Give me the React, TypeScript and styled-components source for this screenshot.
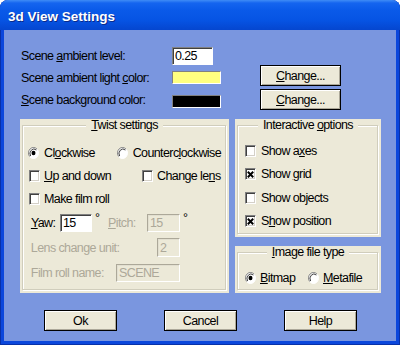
import styled, { createGlobalStyle } from "styled-components";

const GlobalStyle = createGlobalStyle`
  html, body {
    margin: 0;
    padding: 0;
    background: #ffffff;
  }
  body {
    font-family: "Liberation Sans", Arial, sans-serif;
    font-size: 12.5px;
    letter-spacing: -0.6px;
    color: #000;
  }
`;

const Window = styled.div`
  width: 400px;
  height: 345px;
  display: flex;
  flex-direction: column;
  border-radius: 8px 8px 0 0;
  overflow: hidden;
  background: #0b47dc;
  box-shadow: inset 1px 0 #0831a8, inset -1px 0 #0831a8, inset 0 -1px #0831a8;
`;

const TitleBar = styled.div`
  height: 30px;
  flex: none;
  display: flex;
  align-items: center;
  padding: 2px 0 0 8px;
  box-sizing: border-box;
  background: linear-gradient(
    to bottom,
    #3f8cf6 0,
    #1565ef 3px,
    #0a5ae9 10px,
    #0654e4 20px,
    #0546cf 30px
  );
  color: #fff;
  font: bold 13.5px "Liberation Sans", Arial, sans-serif;
  letter-spacing: 0;
  text-shadow: 1px 1px #0b2a8a;
`;

const Body = styled.div`
  flex: 1;
  margin: 0 4px 4px 4px;
  background: #7a96df;
  padding: 16px 0 0 16px;
  display: flex;
  flex-direction: column;
`;

const Row = styled.div<{ $h: number; $top?: number }>`
  display: flex;
  align-items: center;
  height: ${(p) => p.$h}px;
  margin-top: ${(p) => p.$top ?? 0}px;
`;

const RowLabel = styled.span<{ $drop?: number }>`
  width: 151px;
  padding-left: 1px;
  margin-top: ${(p) => p.$drop ?? 0}px;
`;

const Field = styled.input<{ $w: number; $h?: number; $disabled?: boolean }>`
  width: ${(p) => p.$w}px;
  height: ${(p) => p.$h ?? 18}px;
  box-sizing: border-box;
  margin: 0;
  padding: 0 0 0 2px;
  font: inherit;
  letter-spacing: inherit;
  outline: none;
  border: 1px solid;
  border-color: ${(p) =>
    p.$disabled ? "#aca899 #ffffff #ffffff #aca899" : "#808080 #ffffff #ffffff #808080"};
  box-shadow: ${(p) => (p.$disabled ? "inset 1px 1px #e2dfd0" : "inset 1px 1px #404040")};
  background: ${(p) => (p.$disabled ? "#ece9d8" : "#ffffff")};
  color: ${(p) => (p.$disabled ? "#aca899" : "#000")};
`;

const Swatch = styled.span<{ $color: string }>`
  width: 49px;
  height: 13px;
  margin-top: 4px;
  box-sizing: border-box;
  background: ${(p) => p.$color};
  border: 1px solid;
  border-color: #808080 #ffffff #ffffff #808080;
`;

const Button = styled.button<{ $w?: number; $left?: number }>`
  width: ${(p) => p.$w ?? 73}px;
  height: 21px;
  margin: 0 0 0 ${(p) => p.$left ?? 0}px;
  padding: 0;
  box-sizing: border-box;
  background: #ece9d8;
  border: 1px solid #000;
  border-radius: 0;
  box-shadow: inset 1px 1px #ffffff, inset -1px -1px #aca899;
  font: inherit;
  letter-spacing: inherit;
  color: #000;
`;

const Main = styled.div`
  display: flex;
  gap: 6px;
  margin-top: 9px;
`;

const SideColumn = styled.div`
  display: flex;
  flex-direction: column;
  gap: 9px;
`;

const Panel = styled.div<{ $w: number; $h: number }>`
  width: ${(p) => p.$w}px;
  height: ${(p) => p.$h}px;
  box-sizing: border-box;
  background: #ece9d8;
  padding: 0 3px 3px 2px;
  display: flex;
`;

const Group = styled.fieldset<{ $top: number }>`
  flex: 1;
  margin: 0;
  min-width: 0;
  border: 1px solid #d0cdbc;
  box-shadow: inset 1px 1px #ffffff, 1px 1px #ffffff;
  padding: ${(p) => p.$top}px 4px 0 5px;
  display: flex;
  flex-direction: column;
`;

const Caption = styled.legend`
  margin: 0 auto;
  padding: 0 5px;
  line-height: 13px;
  background: #ece9d8;
`;

const Line = styled.div<{ $h: number }>`
  display: flex;
  align-items: center;
  height: ${(p) => p.$h}px;
`;

const Option = styled.label<{ $w?: number; $left?: number; $gap?: number }>`
  display: flex;
  align-items: center;
  gap: ${(p) => p.$gap ?? 4}px;
  width: ${(p) => (p.$w ? `${p.$w}px` : "auto")};
  margin-left: ${(p) => p.$left ?? 0}px;
  white-space: nowrap;
`;

const Box = styled.span`
  width: 11px;
  height: 12px;
  box-sizing: border-box;
  flex: none;
  background: #fff;
  border: 1px solid;
  border-color: #808080 #ffffff #ffffff #808080;
  box-shadow: inset 1px 1px #404040, inset -1px -1px #d4d0c8;
  display: flex;
  align-items: center;
  justify-content: center;
`;

const Text = styled.span<{ $w?: number; $disabled?: boolean }>`
  width: ${(p) => (p.$w ? `${p.$w}px` : "auto")};
  flex: none;
  color: ${(p) => (p.$disabled ? "#aca899" : "#000")};
  white-space: nowrap;
`;

const Degree = styled.span<{ $w: number }>`
  width: ${(p) => p.$w}px;
  padding-left: 3px;
  box-sizing: border-box;
  align-self: flex-start;
  margin-top: 1px;
`;

const Footer = styled.div`
  display: flex;
  gap: 47px;
  padding-left: 24px;
  margin-top: 17px;
`;

const Check = ({ checked }: { checked?: boolean }) => (
  <Box>
    {checked && (
      <svg width="7" height="7" viewBox="0 0 7 7">
        <path d="M0.8 0.8L6.2 6.2M6.2 0.8L0.8 6.2" stroke="#000" strokeWidth="2" />
      </svg>
    )}
  </Box>
);

const Radio = ({ checked }: { checked?: boolean }) => (
  <svg width="11" height="12" viewBox="0 0 11 12" style={{ flex: "none" }}>
    <ellipse cx="5.5" cy="6" rx="5" ry="5.5" fill="#fff" />
    <path d="M9.2 2.3A5 5.5 0 0 0 1.8 9.7" fill="none" stroke="#808080" strokeWidth="1" />
    <path d="M8.4 3A4 4.5 0 0 0 2.6 9" fill="none" stroke="#404040" strokeWidth="1" />
    <path d="M1.8 9.7A5 5.5 0 0 0 9.2 2.3" fill="none" stroke="#ffffff" strokeWidth="1" />
    {checked && <ellipse cx="5.5" cy="6" rx="2" ry="2.2" fill="#000" />}
  </svg>
);

const App = () => {
  return (
    <>
      <GlobalStyle />
      <Window>
        <TitleBar>3d View Settings</TitleBar>
        <Body>
          <Row $h={19}>
            <RowLabel>
              Scene <u>a</u>mbient level:
            </RowLabel>
            <Field $w={41} readOnly defaultValue="0.25" />
          </Row>
          <Row $h={21}>
            <RowLabel $drop={4}>
              Scene ambient light <u>c</u>olor:
            </RowLabel>
            <Swatch $color="#ffff80" />
            <Button $w={81} $left={39}>
              <u>C</u>hange...
            </Button>
          </Row>
          <Row $h={21} $top={3}>
            <RowLabel>
              <u>S</u>cene background color:
            </RowLabel>
            <Swatch $color="#000000" />
            <Button $w={81} $left={39}>
              <u>C</u>hange...
            </Button>
          </Row>

          <Main>
            <Panel $w={209} $h={174}>
              <Group $top={9}>
                <Caption>
                  <u>T</u>wist settings
                </Caption>
                <Line $h={23}>
                  <Option $w={89} $gap={5}>
                    <Radio checked />
                    <Text>
                      Cl<u>o</u>ckwise
                    </Text>
                  </Option>
                  <Option $gap={5}>
                    <Radio />
                    <Text>
                      Counterc<u>l</u>ockwise
                    </Text>
                  </Option>
                </Line>
                <Line $h={23}>
                  <Option $w={113} $left={1}>
                    <Check />
                    <Text>
                      <u>U</u>p and down
                    </Text>
                  </Option>
                  <Option>
                    <Check />
                    <Text>
                      Change le<u>n</u>s
                    </Text>
                  </Option>
                </Line>
                <Line $h={23}>
                  <Option $left={1}>
                    <Check />
                    <Text>Make film roll</Text>
                  </Option>
                </Line>
                <Line $h={25}>
                  <Text $w={32}>
                    &nbsp;<u>Y</u>aw:
                  </Text>
                  <Field $w={32} readOnly defaultValue="15" />
                  <Degree $w={16}>°</Degree>
                  <Text $w={39} $disabled>
                    <u>P</u>itch:
                  </Text>
                  <Field $w={33} $disabled readOnly defaultValue="15" />
                  <Degree $w={10}>°</Degree>
                </Line>
                <Line $h={25}>
                  <Text $w={129} $disabled>
                    &nbsp;Lens change unit:
                  </Text>
                  <Field $w={23} $h={19} $disabled readOnly defaultValue="2" />
                </Line>
                <Line $h={25}>
                  <Text $w={88} $disabled>
                    &nbsp;Film roll name:
                  </Text>
                  <Field $w={64} $disabled readOnly defaultValue="SCENE" />
                </Line>
              </Group>
            </Panel>

            <SideColumn>
              <Panel $w={146} $h={118}>
                <Group $top={7}>
                  <Caption>
                    Interactive <u>o</u>ptions
                  </Caption>
                  <Line $h={24}>
                    <Option $left={2} $gap={5}>
                      <Check />
                      <Text>
                        Show a<u>x</u>es
                      </Text>
                    </Option>
                  </Line>
                  <Line $h={24}>
                    <Option $left={2} $gap={5}>
                      <Check checked />
                      <Text>
                        Show <u>g</u>rid
                      </Text>
                    </Option>
                  </Line>
                  <Line $h={24}>
                    <Option $left={2} $gap={5}>
                      <Check />
                      <Text>Show objects</Text>
                    </Option>
                  </Line>
                  <Line $h={24}>
                    <Option $left={2} $gap={5}>
                      <Check checked />
                      <Text>
                        S<u>h</u>ow position
                      </Text>
                    </Option>
                  </Line>
                </Group>
              </Panel>
              <Panel $w={146} $h={47}>
                <Group $top={8}>
                  <Caption>
                    <u>I</u>mage file type
                  </Caption>
                  <Line $h={24}>
                    <Option $w={63} $left={2} $gap={4}>
                      <Radio checked />
                      <Text>
                        <u>B</u>itmap
                      </Text>
                    </Option>
                    <Option $gap={4}>
                      <Radio />
                      <Text>
                        <u>M</u>etafile
                      </Text>
                    </Option>
                  </Line>
                </Group>
              </Panel>
            </SideColumn>
          </Main>

          <Footer>
            <Button>Ok</Button>
            <Button>Cancel</Button>
            <Button>Help</Button>
          </Footer>
        </Body>
      </Window>
    </>
  );
};

export default App;
